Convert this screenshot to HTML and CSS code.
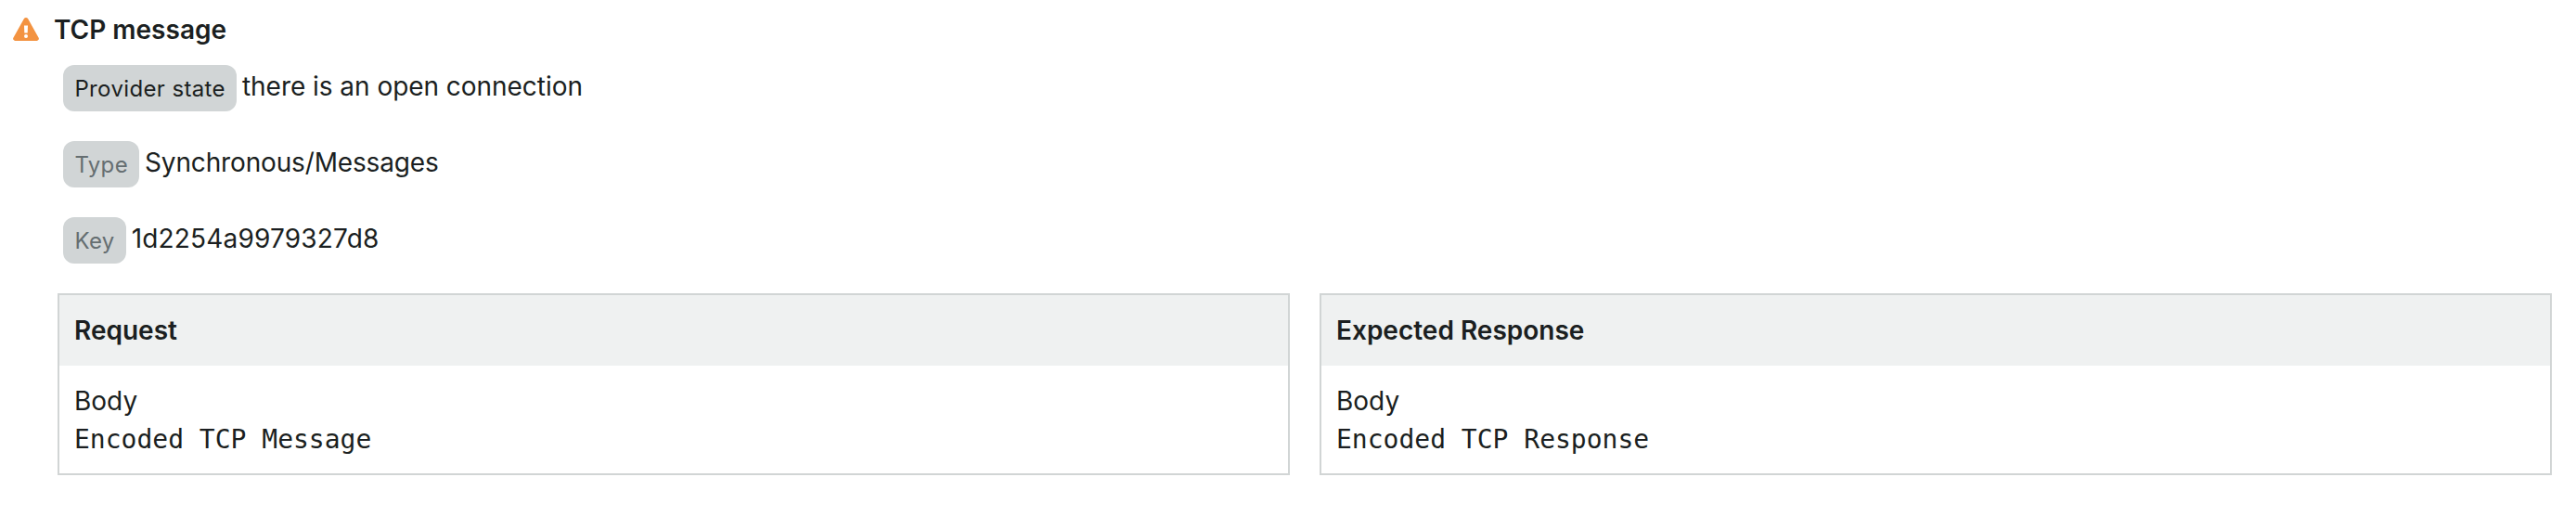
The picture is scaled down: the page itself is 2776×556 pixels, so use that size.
FILE: index.html
```html
<!DOCTYPE html>
<html lang="en">
<head>
<meta charset="utf-8">
<title>TCP message</title>
<link rel="stylesheet" href="styles.css">
</head>
<body>
<main class="interaction">
  <header class="title-row">
    <svg class="warning" viewBox="0 0 28 26" aria-hidden="true">
      <path d="M11.8 1.3a2.6 2.6 0 0 1 4.4 0l11.3 20.2a2.2 2.2 0 0 1-2 3.400H2.500a2.200 2.200 0 0 1-2-3.400z" fill="#f39341"/>
      <path d="M12 8.400h4l-.3 8.200h-3.400z" fill="#fff"/>
      <circle cx="14" cy="20" r="2" fill="#fff"/>
    </svg>
    <h1 class="title">TCP message</h1>
  </header>
  <section class="details">
    <p class="detail"><span class="tag tag-strong">Provider state</span><span class="value">there is an open connection</span></p>
    <p class="detail"><span class="tag">Type</span><span class="value value-type">Synchronous/Messages</span></p>
    <p class="detail"><span class="tag">Key</span><span class="value value-key">1d2254a9979327d8</span></p>
  </section>
  <section class="panels">
    <article class="panel">
      <h2 class="panel-head">Request</h2>
      <div class="panel-body"><div>Body</div><pre class="code">Encoded TCP Message</pre></div>
    </article>
    <article class="panel">
      <h2 class="panel-head">Expected Response</h2>
      <div class="panel-body"><div>Body</div><pre class="code">Encoded TCP Response</pre></div>
    </article>
  </section>
</main>
</body>
</html>
```
FILE: styles.css
```css
* { box-sizing: border-box; margin: 0; padding: 0; }
body { background: #fff; color: #1b1f21; font: 28px/42px Inter, sans-serif; }
.interaction { padding: 11px 26px 0 14px; }
.title-row { display: flex; align-items: center; gap: 16px; height: 42px; }
.warning { width: 28px; height: 26px; }
.title { font-size: 28px; font-weight: 600; line-height: 42px; }
.details { padding: 17px 0 0 54px; }
.detail { display: flex; gap: 6px; height: 82px; }
.value { line-height: 46px; letter-spacing: -0.04px; }
.value-type { letter-spacing: -0.15px; }
.value-key { letter-spacing: 0.18px; }
.tag { height: 50px; padding: 0 12px 0 12.4px; border-radius: 12px; background: #d1d5d6; color: #656e71; font-size: 24px; line-height: 52px; letter-spacing: 0.37px; }
.tag-strong { color: #1b1f21; }
.panels { display: grid; grid-template-columns: 1fr 1fr; gap: 32px; padding-left: 48px; }
.panel { height: 196px; border: 2px solid #d1d5d5; }
.panel-head { height: 76px; padding: 0 16px; background: #eff1f1; font-size: 28px; font-weight: 600; line-height: 76px; }
.panel-body { padding: 17px 16px 15px; }
.code { font: 28px/42px "DejaVu Sans Mono", monospace; }
```
